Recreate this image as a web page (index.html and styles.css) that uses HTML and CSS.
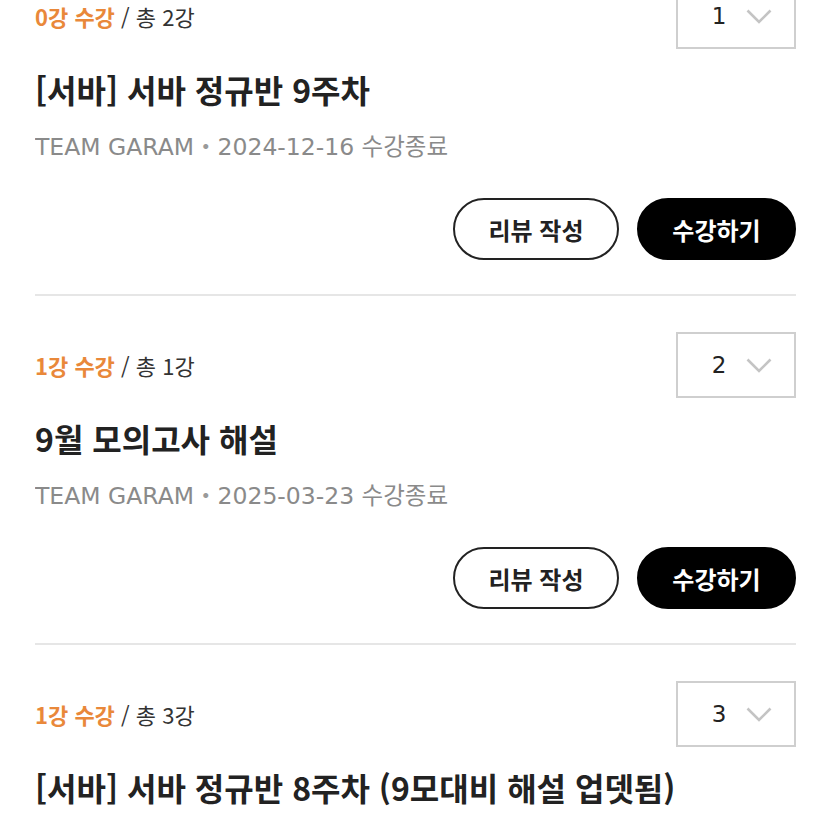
FILE: index.html
```html
<!DOCTYPE html>
<html lang="ko">

<head>
   <meta charset="UTF-8">
   <meta name="viewport" content="width=device-width, initial-scale=1.0">
   <title>내 강의실</title>
   <link rel="stylesheet" href="styles.css">
</head>

<body>
   <!-- 수강 목록 -->
   <div class="lista">

      <div class="curso">
         <div class="curso-cabeza">
            <p class="progreso"><span class="hecho">0강 수강</span> / 총 2강</p>
            <div class="selector">
               <span>1</span>
               <svg width="26" height="15" viewBox="0 0 26 15"><path d="M1.5 1.5 L13 13 L24.5 1.5" fill="none" stroke="#c4c4c4" stroke-width="2.6"/></svg>
            </div>
         </div>
         <h3 class="titulo">[서바] 서바 정규반 9주차</h3>
         <p class="meta">TEAM GARAM<span class="punto">・</span>2024-12-16 수강종료</p>
         <div class="acciones">
            <button class="boton boton-linea">리뷰 작성</button>
            <button class="boton boton-lleno">수강하기</button>
         </div>
      </div>

      <div class="curso">
         <div class="curso-cabeza">
            <p class="progreso"><span class="hecho">1강 수강</span> / 총 1강</p>
            <div class="selector">
               <span>2</span>
               <svg width="26" height="15" viewBox="0 0 26 15"><path d="M1.5 1.5 L13 13 L24.5 1.5" fill="none" stroke="#c4c4c4" stroke-width="2.6"/></svg>
            </div>
         </div>
         <h3 class="titulo">9월 모의고사 해설</h3>
         <p class="meta">TEAM GARAM<span class="punto">・</span>2025-03-23 수강종료</p>
         <div class="acciones">
            <button class="boton boton-linea">리뷰 작성</button>
            <button class="boton boton-lleno">수강하기</button>
         </div>
      </div>

      <div class="curso">
         <div class="curso-cabeza">
            <p class="progreso"><span class="hecho">1강 수강</span> / 총 3강</p>
            <div class="selector">
               <span>3</span>
               <svg width="26" height="15" viewBox="0 0 26 15"><path d="M1.5 1.5 L13 13 L24.5 1.5" fill="none" stroke="#c4c4c4" stroke-width="2.6"/></svg>
            </div>
         </div>
         <h3 class="titulo">[서바] 서바 정규반 8주차 (9모대비 해설 업뎃됨)</h3>
      </div>

   </div>
</body>

</html>
```

FILE: styles.css
```css
/* Base */
body {
   margin: 0;
   background: #fff;
   font-family: "Noto Sans CJK KR", "Noto Sans", sans-serif;
   color: #222;
   overflow: hidden;
}

/* Lista de cursos (recortada arriba como en la captura) */
.lista {
   margin-top: -53px;
   padding: 0 35px;
}

.curso {
   padding: 36px 0 34px;
   border-bottom: 2px solid #e6e6e6;
}

.curso-cabeza {
   display: flex;
   align-items: center;
   justify-content: space-between;
   height: 66px;
}

.progreso {
   margin: 0;
   font-size: 22px;
   line-height: 32px;
   color: #333;
}

.hecho {
   color: #e9883a;
   font-weight: 700;
}

/* Selector de número */
.selector {
   box-sizing: border-box;
   width: 120px;
   height: 66px;
   border: 2px solid #cfcfcf;
   display: flex;
   align-items: center;
   justify-content: center;
   gap: 20px;
   padding-left: 12px;
   font-family: "DejaVu Sans", sans-serif;
   font-size: 23px;
   color: #222;
}

.titulo {
   margin: 20px 0 0;
   height: 40px;
   font-size: 32px;
   line-height: 40px;
   font-weight: 700;
   color: #222;
}

.meta {
   margin: 20px 0 0;
   height: 32px;
   overflow: hidden;
   font-family: "DejaVu Sans", "Noto Sans CJK KR", sans-serif;
   font-size: 23.5px;
   line-height: 32px;
   color: #8a8a8a;
}

.punto {
   font-family: "Noto Sans CJK KR", sans-serif;
   color: #9a9a9a;
}

/* Botones */
.acciones {
   margin-top: 37px;
   display: flex;
   justify-content: flex-end;
   gap: 18px;
}

.boton {
   box-sizing: border-box;
   height: 62px;
   border-radius: 31px;
   font-family: inherit;
   font-size: 24px;
   font-weight: 700;
   cursor: pointer;
}

.boton-linea {
   width: 166px;
   background: #fff;
   border: 2px solid #222;
   color: #222;
}

.boton-lleno {
   width: 159px;
   background: #000;
   border: 2px solid #000;
   color: #fff;
}
```
